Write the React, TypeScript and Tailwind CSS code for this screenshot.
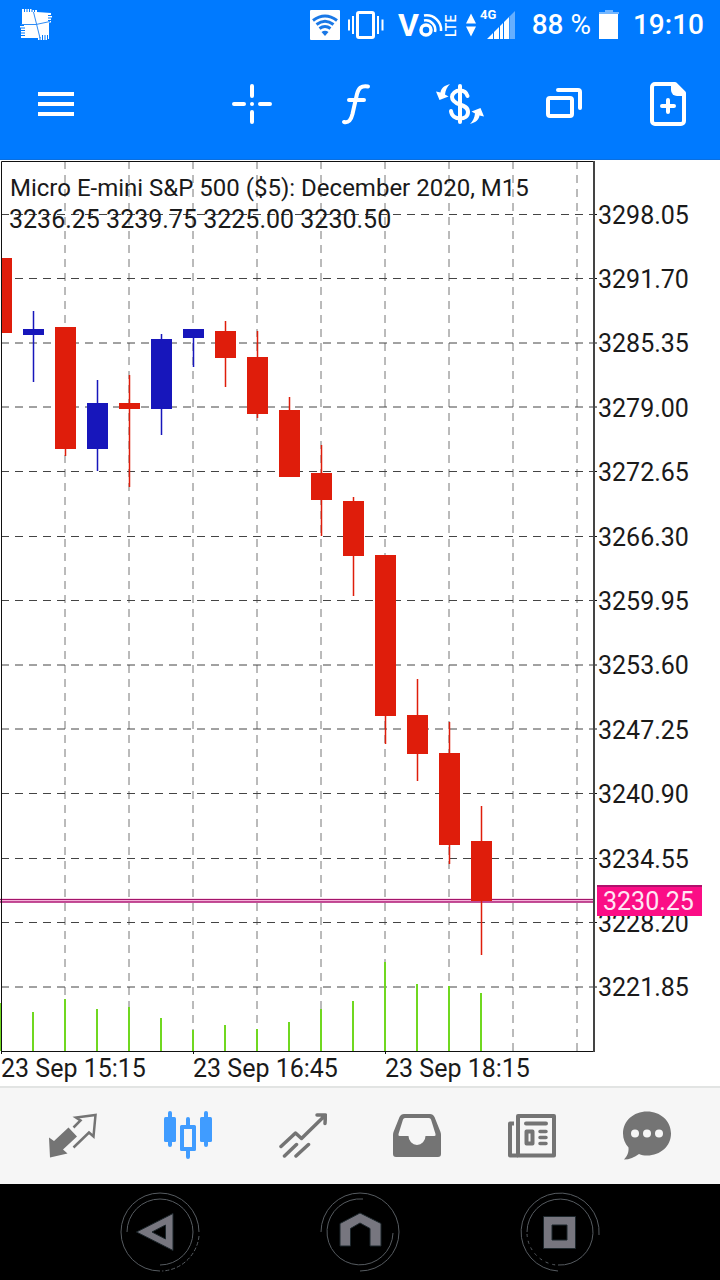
import React from "react";

const prices = [
  "3298.05", "3291.70", "3285.35", "3279.00", "3272.65", "3266.30", "3259.95",
  "3253.60", "3247.25", "3240.90", "3234.55", "3228.20", "3221.85",
];

const times = ["23 Sep 15:15", "23 Sep 16:45", "23 Sep 18:15"];

const gridRows = [54.5, 118.5, 183, 247, 311.5, 376.5, 440.5, 505, 569, 633.5, 698.5, 762.5, 827];
const gridCols = [65, 129, 193, 257, 321, 385, 449, 513, 577];

// x, high, body top, body bottom, low
const candles = [
  { x: 33, high: 151, top: 169, bottom: 175, low: 222, up: true },
  { x: 65, high: 167, top: 167, bottom: 289, low: 296, up: false },
  { x: 97, high: 220, top: 243, bottom: 289, low: 311, up: true },
  { x: 129, high: 215, top: 243, bottom: 249, low: 327, up: false },
  { x: 161, high: 174, top: 179, bottom: 249, low: 275, up: true },
  { x: 193, high: 169, top: 169, bottom: 178, low: 207, up: true },
  { x: 225, high: 161, top: 171, bottom: 198, low: 227, up: false },
  { x: 257, high: 171, top: 197, bottom: 254, low: 258, up: false },
  { x: 289, high: 237, top: 250, bottom: 317, low: 317, up: false },
  { x: 321, high: 285, top: 313, bottom: 340, low: 376, up: false },
  { x: 353, high: 337, top: 341, bottom: 396, low: 436, up: false },
  { x: 385, high: 395, top: 395, bottom: 556, low: 584, up: false },
  { x: 417, high: 519, top: 555, bottom: 594, low: 621, up: false },
  { x: 449, high: 562, top: 593, bottom: 685, low: 704, up: false },
  { x: 481, high: 646, top: 681, bottom: 741, low: 795, up: false },
];

const volumes = [843, 852, 839, 849, 847, 858, 870, 865, 869, 862, 849, 841, 802, 824, 826, 833];

const StatusBar = () => {
  return (
    <div className="flex h-12 items-center pl-5 pr-4 pt-0.5 text-[28px] font-medium leading-none text-white">
      <svg className="h-8 w-8" viewBox="0 0 32 32" fill="#fff">
        <path d="M2 0h2v3h1V0h1.500v3h1V0H9v3h1V0h1.500v3h1V1H14v2h1V1h2v2l14 1v2h-3v1h4v1.500h-4v1h3V11h-3v1h3v1.500h-2V30h-1v-4h-1v5h-1.500v-5h-1v5H23v-5h-1v5h-1.500v-3h-1v3H18v-2H1v-2h4v-1H1v-1.500h4v-1H1V22h4v-1H1v-1.500h4v-1H0V17h4v-1H2z" />
        <path d="M13.500 3 20 29M1 15.500h15l14-3" stroke="#2f8cf5" strokeWidth="1" fill="none" />
      </svg>
      <div className="ml-auto flex items-center">
        <svg className="h-[30px] w-[30px]" viewBox="0 0 30 30">
          <rect width="30" height="30" rx="1" fill="#fff" />
          <g fill="none" stroke="#1a78e6" strokeWidth="3">
            <path d="M3 10.500Q15 1.500 27 10.500" />
            <path d="M6.500 14.500Q15 8 23.500 14.500" />
            <path d="M9.500 18.500Q15 14.500 20.500 18.500" />
          </g>
          <path d="M11.500 22Q15 19.500 18.500 22L15 26z" fill="#1a78e6" />
        </svg>
        <svg className="ml-2 h-[30px] w-9" viewBox="0 0 36 30">
          <rect x="9.500" y="2.500" width="16" height="25" rx="1.500" fill="none" stroke="#fff" strokeWidth="3" />
          <path d="M1 9.500v11M5 6v18M30 6v18M34.500 9.500v11" stroke="#fff" strokeWidth="2" />
        </svg>
        <svg className="ml-3.5 h-8 w-[60px] overflow-visible" viewBox="0 0 60 32" fill="#fff">
          <text x="0" y="27" fontFamily="Roboto, sans-serif" fontWeight="700" fontSize="32">V</text>
          <circle cx="28" cy="21" r="5" fill="none" stroke="#fff" strokeWidth="3.500" />
          <path d="M26 11.500A9.500 9.500 0 0 1 37 23M26 6.500A14.500 14.500 0 0 1 43 22" fill="none" stroke="#fff" strokeWidth="2.500" />
          <text transform="translate(58 28) rotate(-90)" fontFamily="Roboto, sans-serif" fontWeight="500" fontSize="14">LTE</text>
        </svg>
        <svg className="ml-2 h-8 w-[50px] overflow-visible" viewBox="0 0 50 32" fill="#fff">
          <path d="M0 14.500h10L5 4.500zM0 17.500h10L5 27.500z" />
          <text x="14" y="10" fontFamily="Roboto, sans-serif" fontWeight="700" fontSize="13">4G</text>
          <path d="M21 30 27 24v6zM28 23l5-5v12h-5zM34 17l3-3v16h-3zM38 13l5-5v22h-5z" />
          <path d="M43.500 7.500 49 2v28h-5.500z" opacity=".4" />
        </svg>
        <span className="ml-4">88 <span className="font-normal">%</span></span>
        <svg className="ml-2 h-[30px] w-5" viewBox="0 0 20 30" fill="#fff">
          <path d="M6 0h8v2h6v2H0V2h6z" opacity=".45" />
          <path d="M0 4h19v25H0z" />
        </svg>
        <span className="ml-3.5">19:10</span>
      </div>
    </div>
  );
};

const Toolbar = () => {
  const tool = "flex h-full w-[104px] items-center justify-center";
  return (
    <div className="flex h-28 items-center justify-between border-b border-[#0b6fdf]">
      <button aria-label="Menu" className="flex h-full w-28 items-center justify-center">
        <svg className="h-12 w-12" viewBox="0 0 48 48" stroke="#fff" strokeWidth="4">
          <path d="M6 14h36M6 24h36M6 34h36" />
        </svg>
      </button>
      <div className="flex h-full">
        <button aria-label="Crosshair" className={tool}>
          <svg className="h-12 w-12" viewBox="0 0 48 48" stroke="#fff" strokeWidth="4" strokeLinecap="round">
            <path d="M24 6v10M24 32v10M6 24h10M32 24h10" />
            <circle cx="24" cy="24" r="2" fill="#fff" stroke="none" />
          </svg>
        </button>
        <button aria-label="Indicators" className={tool}>
          <svg className="h-12 w-12" viewBox="0 0 48 48" fill="none" stroke="#fff" strokeWidth="4" strokeLinecap="round">
            <path d="M12 42c5 1 7-2 8.500-8L25 14c1.500-6 4-8.500 11-7.500M17 20h15" />
          </svg>
        </button>
        <button aria-label="Trade" className={tool}>
          <svg className="h-12 w-12" viewBox="0 0 48 48" fill="none" stroke="#fff" strokeWidth="4" strokeLinecap="round">
            <path d="M24 6v36" />
            <path d="M31.500 16c-1-3.500-4-5.500-7.500-5.500c-4.500 0-8 3-8 6.500c0 4 3.500 6 8 7.500s8 3 8 7.500-3.500 6.500-8 6.500-8.500-2.500-9-7.500" />
            <g fill="#fff" stroke="none">
              <path d="M14 4C8 5.500 5 8.500 4.500 12.500L0 11.500 3.500 20 12.500 16.500 9 14.500C9.500 10 11 7 14 4z" />
              <path transform="rotate(180 24 24)" d="M14 4C8 5.500 5 8.500 4.500 12.500L0 11.500 3.500 20 12.500 16.500 9 14.500C9.500 10 11 7 14 4z" />
            </g>
          </svg>
        </button>
        <button aria-label="Windows" className={tool}>
          <svg className="h-12 w-12" viewBox="0 0 48 48" fill="none" stroke="#fff" strokeWidth="4" strokeLinecap="round">
            <rect x="8" y="18" width="24" height="18" rx="2" />
            <path d="M18 10h20a2 2 0 0 1 2 2v16" />
          </svg>
        </button>
        <button aria-label="New order" className={tool}>
          <svg className="h-12 w-12" viewBox="0 0 48 48" fill="none" stroke="#fff" strokeWidth="4" strokeLinecap="round" strokeLinejoin="round">
            <path d="M11 4h20l9 9v28a3 3 0 0 1-3 3H11a3 3 0 0 1-3-3V7a3 3 0 0 1 3-3z" />
            <path d="M27 4v6a6 6 0 0 0 6 6h7v-4l-8-8z" fill="#fff" stroke="none" />
            <path d="M24 20v12M18 26h12" />
          </svg>
        </button>
      </div>
    </div>
  );
};

const Plot = () => {
  return (
    <svg className="block h-full w-full overflow-visible" viewBox="0 0 597 892" preserveAspectRatio="none">
      <g stroke="#777" strokeWidth="1" strokeDasharray="8 6">
        {gridCols.map((x) => <path key={x} d={`M${x} 1V891`} />)}
      </g>
      <g stroke="#444" strokeWidth="1" strokeDasharray="8 6">
        {gridRows.map((y) => <path key={y} d={`M1 ${y}H594`} />)}
      </g>
      <g stroke="#111" strokeWidth="1">
        {gridRows.map((y) => <path key={y} d={`M594 ${y}h3`} />)}
        <path d="M1.500 891v3M193.500 891v3M385.500 891v3" />
      </g>
      <g stroke="#70d820" strokeWidth="2">
        {volumes.map((y, i) => <path key={i} d={`M${1 + i * 32} ${y}V891`} />)}
      </g>
      <path d="M0 740.500H594" stroke="#f3b3d8" strokeWidth="4" />
      <path d="M0 739.500H594" stroke="#a3146b" />
      <path d="M0 742H594" stroke="#b0207a" strokeWidth="1.500" />
      <path d="M2 98h10v75H2z" fill="#df1d0b" />
      {candles.map((c) => (
        <g key={c.x} fill={c.up ? "#1716bb" : "#df1d0b"}>
          <rect x={c.x - 0.25} y={c.high} width="1.500" height={c.low - c.high} />
          <rect x={c.x - 10} y={c.top} width="21" height={c.bottom - c.top} />
        </g>
      ))}
      <path d="M1.500 892V1.500H594M1 891.500H594" fill="none" stroke="#111" />
      <path d="M594 1V892" stroke="#444" strokeWidth="2" />
    </svg>
  );
};

const Chart = () => {
  return (
    <main className="flex flex-1 flex-col text-[25px] leading-none text-[#1a1a1a]">
      <div className="grid flex-1 grid-cols-[1fr_123px]">
        <div className="relative">
          <Plot />
          <div className="absolute left-2 top-3">
            <h1 className="pl-0.5 text-2xl leading-8">Micro E-mini S&amp;P 500 ($5): December 2020, M15</h1>
            <p className="pl-px leading-8">3236.25 3239.75 3225.00 3230.50</p>
          </div>
        </div>
        <div className="relative">
          <ul className="flex h-full flex-col pb-8 pl-px pt-[23px]">
            {prices.map((p) => (
              <li key={p} className="flex flex-1 items-center">{p}</li>
            ))}
          </ul>
          <div className="absolute left-0 top-[81.3%] border-t-2 border-[#b0106c] bg-[#fb0d86] pl-1.5 pr-2 pt-px leading-7 text-[#ffe6f4]">
            3230.25
          </div>
        </div>
      </div>
      <div className="flex h-[34px] items-center pb-0.5">
        {times.map((t) => (
          <span key={t} className="w-48 pl-px">{t}</span>
        ))}
      </div>
    </main>
  );
};

const TabBar = () => {
  const tab = "flex flex-1 items-center justify-center";
  return (
    <nav className="flex h-[98px] border-t-2 border-[#e2e4e3] bg-[#f6f6f6] px-4 pb-0.5 text-[#747474]">
      <button aria-label="Quotes" className={tab}>
        <svg className="h-12 w-12" viewBox="0 0 48 48" fill="none" stroke="currentColor" strokeWidth="2.500">
          <path d="M0 26.500 5 30 19.500 16.500 28 25.500 14 38.500 18.500 42.500 1 46.500z" fill="currentColor" stroke="none" />
          <path d="M24.500 16.500 31.500 9.500 27 6.500 46.500 4 44.500 25.500 40 21.500 24.500 36.500" />
        </svg>
      </button>
      <button aria-label="Charts" className={tab + " text-[#409cff]"}>
        <svg className="h-12 w-12 overflow-visible" viewBox="0 0 48 48" fill="currentColor">
          <rect y="6" width="12" height="25" rx="1.500" />
          <rect x="4" width="4" height="36" rx="2" />
          <rect x="36" y="6" width="12" height="25" rx="1.500" />
          <rect x="40" width="4" height="36" rx="2" />
          <path fillRule="evenodd" d="M17.500 14h13a1.500 1.500 0 0 1 1.500 1.500v23a1.500 1.500 0 0 1-1.500 1.500H26v6a2 2 0 0 1-4 0v-6h-4.500a1.500 1.500 0 0 1-1.500-1.500v-23a1.500 1.500 0 0 1 1.500-1.500zM20 18v18h8V18z" />
          <rect x="22" y="6" width="4" height="10" rx="2" />
        </svg>
      </button>
      <button aria-label="Trade" className={tab}>
        <svg className="h-12 w-12" viewBox="0 0 48 48" fill="none" stroke="currentColor" strokeWidth="3.500" strokeLinecap="round" strokeLinejoin="round">
          <path d="M2 35.500 16.500 22 22.500 27.500 46 4.500M38 4h8.500l-.5 8.500M5.500 45 17.500 33.500M17 45 29.500 33.500" />
        </svg>
      </button>
      <button aria-label="History" className={tab}>
        <svg className="h-12 w-12" viewBox="0 0 48 48" fill="currentColor" fillRule="evenodd">
          <path d="M11 3h26q3 0 4.500 3l6 15q.5 1.500.5 3v19q0 3-3 3H3q-3 0-3-3V24q0-1.500.5-3l6-15Q8 3 11 3zM12 7q-1.500 0-2 1.500L5.500 23q-.5 2 1 2h9a8.500 9 0 0 0 17 0h9q1.500 0 1-2L38 8.500Q37.500 7 36 7z" />
        </svg>
      </button>
      <button aria-label="News" className={tab}>
        <svg className="h-12 w-12" viewBox="0 0 48 48" fill="none" stroke="currentColor" strokeWidth="4" strokeLinecap="round" strokeLinejoin="round">
          <rect x="10" y="5" width="36" height="39.500" />
          <path d="M6 12.500H2v32h8" strokeLinecap="butt" />
          <path d="M18 12.500h20" />
          <rect x="18.500" y="20.500" width="6" height="12" />
          <path d="M32 20.500h6M32 26.500h6M32 32.500h6" strokeWidth="3.500" />
        </svg>
      </button>
      <button aria-label="Messages" className={tab}>
        <svg className="h-12 w-12 overflow-visible" viewBox="0 0 48 48">
          <path d="M24 .5c13.500 0 24 9.500 24 22s-10.500 22-24 22c-3 0-5.500-.5-8-1.500-4.500 3.500-9.500 5.500-15 5.500 3-3 5-7 4.500-12C2 32.500 0 28 0 22.500 0 10 10.500.500 24 .500z" fill="currentColor" />
          <g fill="#f6f6f6">
            <circle cx="12" cy="22.500" r="4" />
            <circle cx="24" cy="22.500" r="4" />
            <circle cx="36" cy="22.500" r="4" />
          </g>
        </svg>
      </button>
    </nav>
  );
};

const SystemBar = () => {
  const key = "flex flex-1 items-center justify-center";
  return (
    <nav className="flex h-24 bg-black px-[60px]">
      <button aria-label="Back" className={key}>
        <svg className="h-20 w-20" viewBox="0 0 80 80" fill="none" stroke="#565b60">
          <path d="M40 79A39 39 0 1 1 79 40M7 40A33 33 0 1 1 40 73" />
          <path d="M79 44A39 39 0 0 1 42 79" strokeDasharray="4 2" />
          <path d="M16.500 40 53 21.500v37zM32 40l13.500 7V33z" fill="#77767f" fillRule="evenodd" stroke="#1d272c" />
        </svg>
      </button>
      <button aria-label="Home" className={key}>
        <svg className="h-20 w-20" viewBox="0 0 80 80" fill="none" stroke="#565b60">
          <path d="M1 40A39 39 0 1 1 40 79M43 7A33 33 0 1 0 73 41" />
          <path d="M40 21 61 31.500V54H50V36.500L40 31 30.500 36.500V54H20V31.500z" fill="#77767f" stroke="#1d272c" />
        </svg>
      </button>
      <button aria-label="Recents" className={key}>
        <svg className="h-20 w-20" viewBox="0 0 80 80" fill="none" stroke="#565b60">
          <path d="M38 79A39 39 0 1 1 79 43M7 40A33 33 0 1 1 38 73" />
          <path d="M7 42A33 33 0 0 0 36 73" strokeDasharray="3 4" />
          <path d="M23.500 24.500h32v32h-32zM32 33v15h15V33z" fill="#77767f" fillRule="evenodd" stroke="#1d272c" />
        </svg>
      </button>
    </nav>
  );
};

const App = () => {
  return (
    <div className="flex min-h-screen flex-col bg-white font-['Roboto',sans-serif]">
      <header className="bg-[#007aff]">
        <StatusBar />
        <Toolbar />
      </header>
      <Chart />
      <TabBar />
      <SystemBar />
    </div>
  );
};

export default App;
